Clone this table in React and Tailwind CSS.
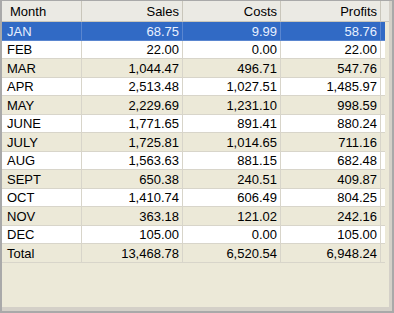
import React from "react";

const rows = [
  ["JAN", "68.75", "9.99", "58.76"],
  ["FEB", "22.00", "0.00", "22.00"],
  ["MAR", "1,044.47", "496.71", "547.76"],
  ["APR", "2,513.48", "1,027.51", "1,485.97"],
  ["MAY", "2,229.69", "1,231.10", "998.59"],
  ["JUNE", "1,771.65", "891.41", "880.24"],
  ["JULY", "1,725.81", "1,014.65", "711.16"],
  ["AUG", "1,563.63", "881.15", "682.48"],
  ["SEPT", "650.38", "240.51", "409.87"],
  ["OCT", "1,410.74", "606.49", "804.25"],
  ["NOV", "363.18", "121.02", "242.16"],
  ["DEC", "105.00", "0.00", "105.00"],
  ["Total", "13,468.78", "6,520.54", "6,948.24"],
];

export default function App() {
  return (
    <div
      className="w-[394px] h-[313px] bg-[#a9a9a9] p-[1px] pl-[2px] pr-[2px] pb-[2px] text-[13px] leading-none"
      style={{ fontFamily: '"Liberation Sans", Arial, sans-serif' }}
    >
      <div className="w-full h-full bg-[#ece9d8] border-r-[3px] border-b-[4px] border-[#d4d0c8] flex flex-col">
        <div className="flex h-[21px] bg-[#ebeae4] border-b border-[#c9c6bb] text-black items-center">
          <div className="w-[80px] pl-[8px] h-full flex items-center border-r border-[#c9c6bb]">Month</div>
          <div className="w-[101px] pr-[3px] h-full flex items-center justify-end border-r border-[#c9c6bb]">Sales</div>
          <div className="w-[98px] pr-[3px] h-full flex items-center justify-end border-r border-[#c9c6bb]">Costs</div>
          <div className="w-[100px] pr-[3px] h-full flex items-center justify-end border-r border-[#c9c6bb]">Profits</div>
          <div className="flex-1 h-full" />
        </div>
        {rows.map((r, i) => {
          const sel = i === 0;
          const bg = sel ? "bg-[#316ac5] text-[#e8f0ff]" : i % 2 === 1 ? "bg-white text-black" : "bg-[#ece9d8] text-black";
          const h = i % 2 === 0 ? "h-[19px]" : "h-[18px]";
          const line = sel ? "border-[#5a86d0]" : "border-[#d8d5ca]";
          return (
            <div key={r[0]} className={`flex ${h}`}>
              <div className={`flex ${bg} w-[383px] border-b ${line}`}>
                <div className={`w-[80px] pl-[5px] flex items-center border-r ${line}`}>{r[0]}</div>
                <div className={`w-[101px] pr-[3px] flex items-center justify-end border-r ${line}`}>{r[1]}</div>
                <div className={`w-[98px] pr-[3px] flex items-center justify-end border-r ${line}`}>{r[2]}</div>
                <div className={`w-[100px] pr-[3px] flex items-center justify-end border-r ${line}`}>{r[3]}</div>
              </div>
              <div className="flex-1" />
            </div>
          );
        })}
      </div>
    </div>
  );
}
